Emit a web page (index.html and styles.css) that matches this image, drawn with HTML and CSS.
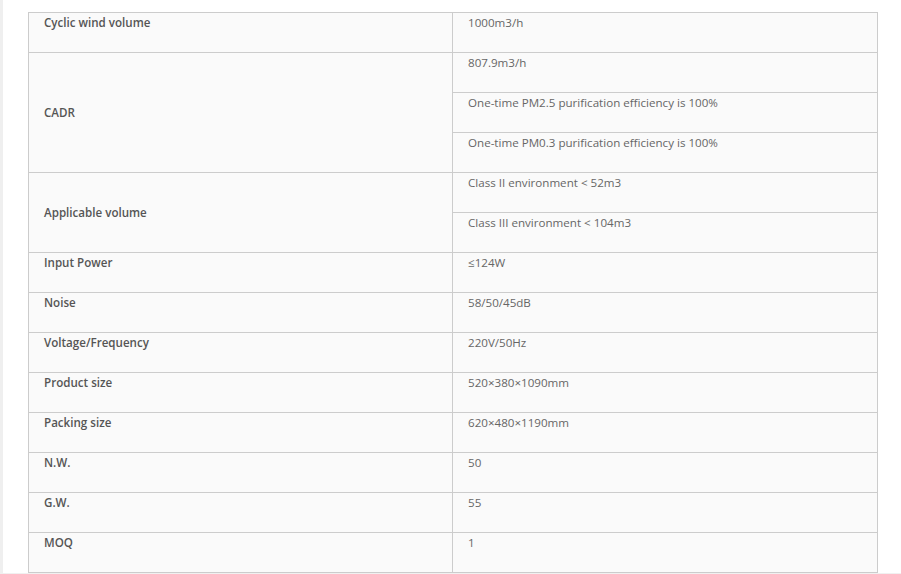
FILE: index.html
```html
<!DOCTYPE html>
<html>
<head>
<meta charset="utf-8">
<link rel="stylesheet" href="styles.css">
</head>
<body>
<div class="page">
  <table class="spec">
    <colgroup><col class="c1"><col class="c2"></colgroup>
    <tbody>
      <tr><th>Cyclic wind volume</th><td>1000m3/h</td></tr>
      <tr><th rowspan="3" class="mid">CADR</th><td>807.9m3/h</td></tr>
      <tr><td>One-time PM2.5 purification efficiency is 100%</td></tr>
      <tr><td>One-time PM0.3 purification efficiency is 100%</td></tr>
      <tr><th rowspan="2" class="mid">Applicable volume</th><td>Class II environment &lt; 52m3</td></tr>
      <tr><td>Class III environment &lt; 104m3</td></tr>
      <tr><th>Input Power</th><td>≤124W</td></tr>
      <tr><th>Noise</th><td>58/50/45dB</td></tr>
      <tr><th>Voltage/Frequency</th><td>220V/50Hz</td></tr>
      <tr><th>Product size</th><td>520×380×1090mm</td></tr>
      <tr><th>Packing size</th><td>620×480×1190mm</td></tr>
      <tr><th>N.W.</th><td>50</td></tr>
      <tr><th>G.W.</th><td>55</td></tr>
      <tr><th>MOQ</th><td>1</td></tr>
    </tbody>
  </table>
</div>
<div class="footer-band"></div>
</body>
</html>
```
FILE: styles.css
```css
html, body {
  margin: 0;
  padding: 0;
  background: #ffffff;
}
body {
  border-left: 3px solid #efefef;
  font-family: "Source Sans Pro", "Open Sans", "Noto Sans", sans-serif;
  font-size: 11.6px;
  color: #666;
}
.page {
  padding: 12px 0 0 25px;
}
.spec {
  border-collapse: collapse;
  width: 849px;
  table-layout: fixed;
  background: #fafafa;
}
.c1 { width: 424px; }
.c2 { width: 425px; }
.spec th, .spec td {
  border: 1px solid #cccccc;
  height: 40px;
  box-sizing: border-box;
  padding: 1px 15px 0 15px;
  vertical-align: top;
  text-align: left;
  line-height: 18px;
}
.spec th {
  font-weight: 600;
  color: #555;
}
.spec td {
  font-weight: 400;
  color: #666;
}
.spec th.mid {
  vertical-align: middle;
  padding-top: 0;
}
.footer-band {
  height: 4px;
  background: #f0f0f0;
}
```
